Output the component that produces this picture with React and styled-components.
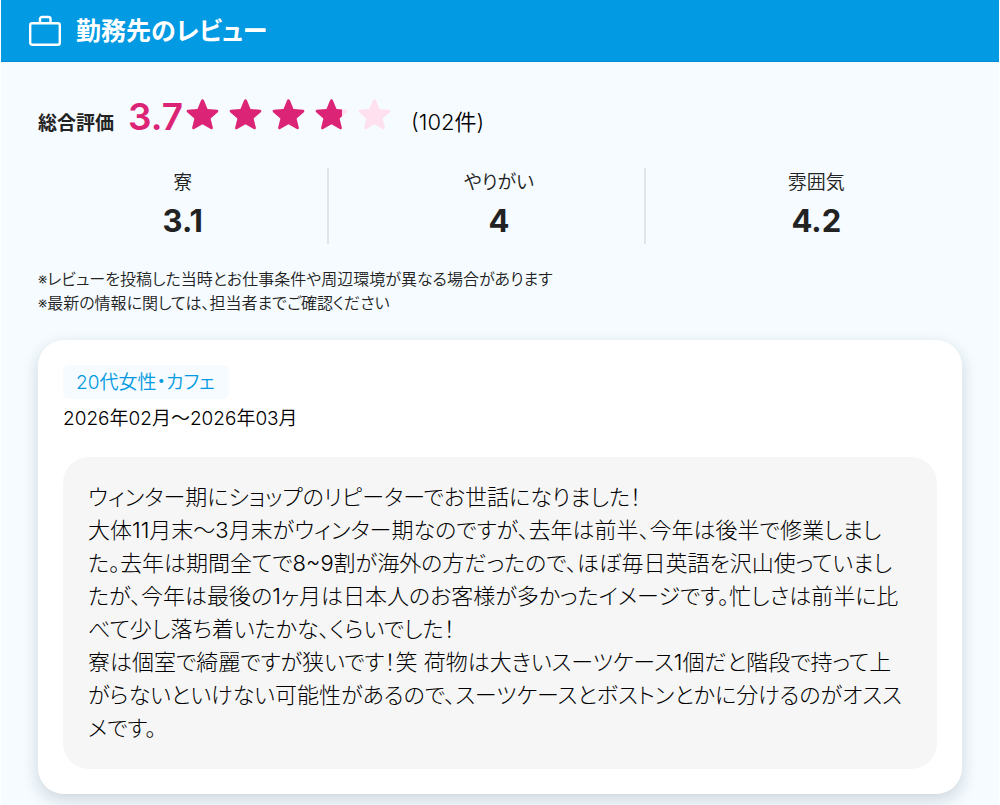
import React from "react";
import styled, { createGlobalStyle } from "styled-components";

const GlobalStyle = createGlobalStyle`
  * {
    box-sizing: border-box;
  }

  body {
    margin: 0;
    background: #fff;
    color: #222;
    font-family: Inter, "Noto Sans CJK JP", sans-serif;
    font-feature-settings: "palt";
    font-weight: 350;
  }
`;

const Section = styled.section`
  margin: 0 1px;
  background: #f5fbff;
`;

const Header = styled.header`
  display: flex;
  align-items: center;
  gap: 13px;
  height: 62px;
  padding: 0 26px;
  border-bottom: 1px solid #0688d8;
  background: #029ae2;
  color: #fff;
`;

const Title = styled.h2`
  margin: 0;
  font-size: 25px;
  font-weight: 700;
  line-height: 36px;
`;

const Content = styled.div`
  padding: 33px 37px 11px;
`;

const Overall = styled.div`
  display: flex;
  align-items: baseline;
`;

const OverallLabel = styled.span`
  margin-right: 14px;
  font-size: 19px;
  font-weight: 700;
`;

const Score = styled.span`
  color: #dc2476;
  font-size: 37px;
  font-weight: 600;
  line-height: 44px;
`;

const Stars = styled.span`
  display: flex;
  margin-right: 13px;
`;

const Count = styled.span`
  color: #000;
  font-size: 22px;
`;

const Scores = styled.dl`
  display: grid;
  grid-template-columns: repeat(3, 1fr);
  gap: 25px;
  margin: 29px 0 23px;
`;

const ScoreItem = styled.div`
  height: 76px;
  text-align: center;

  &:not(:last-child) {
    border-right: 2px solid #e2e5e8;
  }

  dt {
    font-size: 19px;
    line-height: 30px;
  }

  dd {
    margin: 4px 0 0;
    font-size: 31px;
    font-weight: 700;
    line-height: 38px;
  }
`;

const Notes = styled.p`
  margin: 0;
  font-size: 16px;
  line-height: 24px;
`;

const Card = styled.article`
  margin-top: 25px;
  padding: 25px;
  border-radius: 26px;
  background: #fff;
  box-shadow: 0 6px 16px rgba(30, 50, 65, 0.18);
`;

const Tag = styled.span`
  display: inline-block;
  padding: 2px 14px 0 13px;
  border-radius: 6px;
  background: #f5fbff;
  color: #029ae2;
  font-size: 19px;
  line-height: 32px;
`;

const Period = styled.p`
  margin: 5px 0 23px;
  color: #000;
  font-size: 19px;
  line-height: 30px;
`;

const Comment = styled.p`
  margin: 0;
  padding: 24px 25px;
  border-radius: 26px;
  background: #f6f6f6;
  color: #000;
  font-size: 22px;
  font-weight: 300;
  line-height: 33px;
  white-space: pre-line;
`;

const STAR_WIDTH = 43;

const starPath =
  "M16 1.2c.6 0 1.100.4 1.400 1l3.600 8.800 9.500.8c1.400.1 1.800 1.500.8 2.400l-7.200 6.200 2.200 9.200c.3 1.300-.8 2.100-2 1.400L16 26.200 7.700 31c-1.200.7-2.300-.1-2-1.400l2.200-9.200L.7 14.200c-1-.9-.6-2.300.8-2.400l9.500-.8 3.600-8.800c.3-.6.8-1 1.400-1z";

const Briefcase = () => (
  <svg width="36" height="36" viewBox="0 0 36 36" fill="none" stroke="#fff" strokeWidth="2.4" aria-hidden="true">
    <rect x="3.200" y="10.200" width="29.600" height="21.600" rx="2" />
    <path d="M13 10V6a2 2 0 0 1 2-2h6.500a2 2 0 0 1 2 2v4" />
  </svg>
);

const StarShape = ({ width, color }) => (
  <svg width={width} height="32">
    <path d={starPath} fill={color} transform="translate(3.500 0)" />
  </svg>
);

const Star = ({ fill }) => (
  <svg width={STAR_WIDTH} height="32" aria-hidden="true">
    <StarShape width={STAR_WIDTH} color="#ffe0ef" />
    <StarShape width={STAR_WIDTH * fill} color="#dc2476" />
  </svg>
);

const overall = 3.7;

const scores = [
  { label: "寮", value: "3.1" },
  { label: "やりがい", value: "4" },
  { label: "雰囲気", value: "4.2" },
];

const comment = `ウィンター期にショップのリピーターでお世話になりました！
大体11月末〜3月末がウィンター期なのですが、去年は前半、今年は後半で修業しました。去年は期間全てで8~9割が海外の方だったので、ほぼ毎日英語を沢山使っていましたが、今年は最後の1ヶ月は日本人のお客様が多かったイメージです。忙しさは前半に比べて少し落ち着いたかな、くらいでした！
寮は個室で綺麗ですが狭いです！笑 荷物は大きいスーツケース1個だと階段で持って上がらないといけない可能性があるので、スーツケースとボストンとかに分けるのがオススメです。`;

const App = () => {
  return (
    <>
      <GlobalStyle />
      <Section>
        <Header>
          <Briefcase />
          <Title>勤務先のレビュー</Title>
        </Header>
        <Content>
          <Overall>
            <OverallLabel>総合評価</OverallLabel>
            <Score>{overall}</Score>
            <Stars>
              {[0, 1, 2, 3, 4].map((i) => (
                <Star key={i} fill={Math.max(0, Math.min(1, overall - i))} />
              ))}
            </Stars>
            <Count>(102件)</Count>
          </Overall>
          <Scores>
            {scores.map((item) => (
              <ScoreItem key={item.label}>
                <dt>{item.label}</dt>
                <dd>{item.value}</dd>
              </ScoreItem>
            ))}
          </Scores>
          <Notes>
            ※レビューを投稿した当時とお仕事条件や周辺環境が異なる場合があります
            <br />
            ※最新の情報に関しては、担当者までご確認ください
          </Notes>
          <Card>
            <Tag>20代女性・カフェ</Tag>
            <Period>2026年02月〜2026年03月</Period>
            <Comment>{comment}</Comment>
          </Card>
        </Content>
      </Section>
    </>
  );
};

export default App;
